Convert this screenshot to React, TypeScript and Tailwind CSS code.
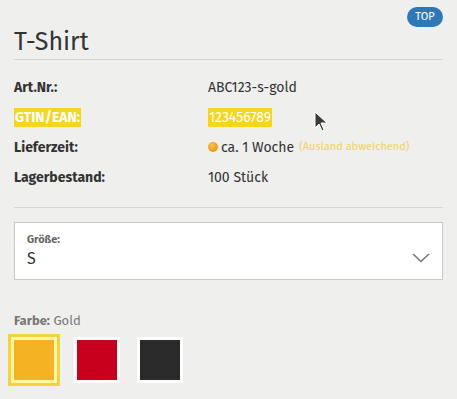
import React from "react";

export default function App() {
  const rows: { label: string; value: React.ReactNode; hl?: boolean }[] = [
    { label: "Art.Nr.:", value: "ABC123-s-gold" },
    { label: "GTIN/EAN:", value: "123456789", hl: true },
    {
      label: "Lieferzeit:",
      value: (
        <span className="flex items-center">
          <span className="mr-[3px] inline-block h-[10px] w-[10px] rounded-full bg-[radial-gradient(circle_at_40%_35%,#ffc04a,#e8860c)]" />
          <span>ca. 1 Woche</span>
          <span className="ml-[5px] text-[11px] text-[#f0d35a]">(Ausland abweichend)</span>
        </span>
      ),
    },
    { label: "Lagerbestand:", value: "100 Stück" },
  ];

  return (
    <div
      className="relative h-[399px] w-[457px] overflow-hidden bg-[#efefed] text-[#333]"
      style={{ fontFamily: '"Fira Sans", "Noto Sans", "Open Sans", sans-serif' }}
    >
      <div className="px-[14px] pt-[7px]">
        <div className="flex justify-end">
          <span className="flex h-[20px] w-[36px] items-center justify-center rounded-full bg-[#2f78b7] text-[11px] text-white">
            TOP
          </span>
        </div>
        <h1 className="mt-[-2px] border-b border-[#d6d6d4] pb-0 text-[25px] leading-[34px] text-[#333]">
          T-Shirt
        </h1>

        <div className="mt-[12px] flex flex-col">
          {rows.map((r) => (
            <div key={r.label} className="flex h-[30px] items-center text-[14px]">
              <div className="w-[194px]">
                <span
                  className={
                    "font-bold " +
                    (r.hl ? "bg-[#f7d51d] px-[1px] py-[1px] text-white" : "text-[#333]")
                  }
                >
                  {r.label}
                </span>
              </div>
              <div>
                {r.hl ? (
                  <span className="bg-[#f7d51d] px-[1px] py-[1px] text-white">{r.value}</span>
                ) : (
                  r.value
                )}
              </div>
            </div>
          ))}
        </div>

        <div className="mt-[15px] border-t border-[#d6d6d4]" />

        <div className="mt-[14px] flex h-[58px] items-center justify-between border border-[#c8c8c8] bg-white pl-[12px] pr-[12px]">
          <div className="flex flex-col">
            <span className="text-[11px] font-bold leading-[14px] text-[#666]">Größe:</span>
            <span className="mt-[2px] text-[16px] leading-[20px] text-[#333]">S</span>
          </div>
          <svg width="18" height="10" viewBox="0 0 18 10" className="mt-[14px]">
            <path d="M1 1 L9 8.5 L17 1" fill="none" stroke="#777" strokeWidth="1.6" />
          </svg>
        </div>

        <div className="mt-[31px] text-[13px] text-[#777]">
          <span className="font-bold">Farbe:</span> Gold
        </div>

        <div className="mt-[3px] flex items-center gap-[17px]">
          <div className="ml-[-6px] border-[3px] border-[#f3d43a] bg-[#fff6a8] p-[3px]">
            <div className="h-[40px] w-[40px] bg-[#f5b324]" />
          </div>
          <div className="ml-[-3px] bg-white p-[3px]">
            <div className="h-[40px] w-[40px] bg-[#c8001e]" />
          </div>
          <div className="bg-white p-[3px]">
            <div className="h-[40px] w-[40px] bg-[#2b2b2b]" />
          </div>
        </div>
      </div>

      <svg
        className="absolute left-[314px] top-[111px]"
        width="16"
        height="22"
        viewBox="0 0 16 22"
      >
        <path d="M1 1 L1 17 L5 13 L8 20 L10 19 L7 12 L13 12 Z" fill="#3a3a3a" stroke="#fff" strokeWidth="1" />
      </svg>
    </div>
  );
}
